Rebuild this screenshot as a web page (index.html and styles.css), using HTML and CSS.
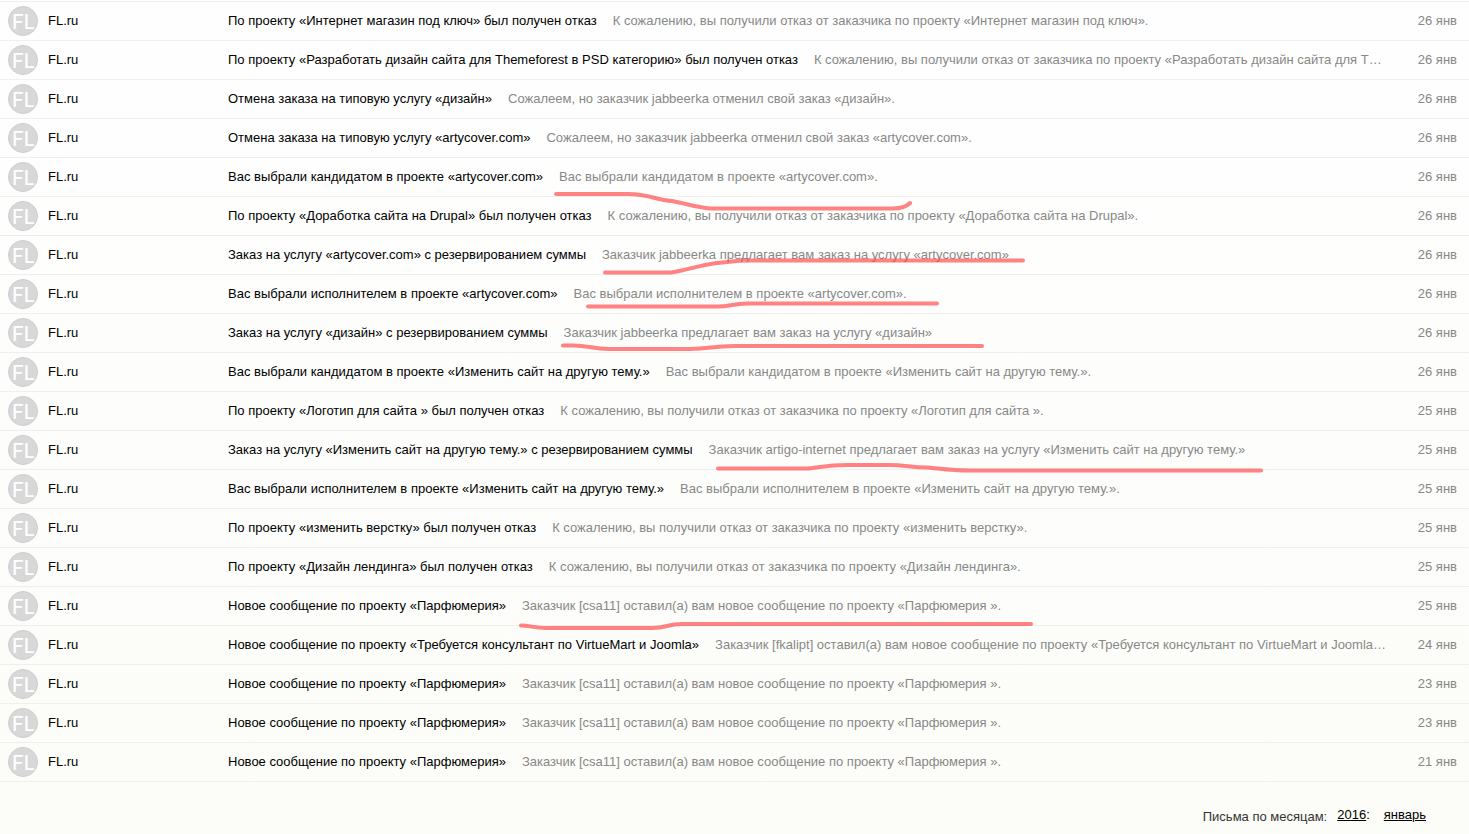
FILE: index.html
```html
<!DOCTYPE html>
<html lang="ru">
 <head>
  <meta charset="UTF-8">
  <title>Входящие</title>
  <link rel="stylesheet" href="styles.css">
 </head>
 <body>
  <div id="wrap">
   <ul class="mails">
    <li><a href="#"><span class="ava">FL</span><span class="from">FL.ru</span><span class="subj">По проекту «Интернет магазин под ключ» был получен отказ</span><span class="text">К сожалению, вы получили отказ от заказчика по проекту «Интернет магазин под ключ».</span><span class="date">26 янв</span></a></li>
    <li><a href="#"><span class="ava">FL</span><span class="from">FL.ru</span><span class="subj">По проекту «Разработать дизайн сайта для Themeforest в PSD категорию» был получен отказ</span><span class="text">К сожалению, вы получили отказ от заказчика по проекту «Разработать дизайн сайта для T…</span><span class="date">26 янв</span></a></li>
    <li><a href="#"><span class="ava">FL</span><span class="from">FL.ru</span><span class="subj">Отмена заказа на типовую услугу «дизайн»</span><span class="text">Сожалеем, но заказчик jabbeerka отменил свой заказ «дизайн».</span><span class="date">26 янв</span></a></li>
    <li><a href="#"><span class="ava">FL</span><span class="from">FL.ru</span><span class="subj">Отмена заказа на типовую услугу «artycover.com»</span><span class="text">Сожалеем, но заказчик jabbeerka отменил свой заказ «artycover.com».</span><span class="date">26 янв</span></a></li>
    <li><a href="#"><span class="ava">FL</span><span class="from">FL.ru</span><span class="subj">Вас выбрали кандидатом в проекте «artycover.com»</span><span class="text">Вас выбрали кандидатом в проекте «artycover.com».</span><span class="date">26 янв</span></a></li>
    <li><a href="#"><span class="ava">FL</span><span class="from">FL.ru</span><span class="subj">По проекту «Доработка сайта на Drupal» был получен отказ</span><span class="text">К сожалению, вы получили отказ от заказчика по проекту «Доработка сайта на Drupal».</span><span class="date">26 янв</span></a></li>
    <li><a href="#"><span class="ava">FL</span><span class="from">FL.ru</span><span class="subj">Заказ на услугу «artycover.com» с резервированием суммы</span><span class="text">Заказчик jabbeerka предлагает вам заказ на услугу «artycover.com»</span><span class="date">26 янв</span></a></li>
    <li><a href="#"><span class="ava">FL</span><span class="from">FL.ru</span><span class="subj">Вас выбрали исполнителем в проекте «artycover.com»</span><span class="text">Вас выбрали исполнителем в проекте «artycover.com».</span><span class="date">26 янв</span></a></li>
    <li><a href="#"><span class="ava">FL</span><span class="from">FL.ru</span><span class="subj">Заказ на услугу «дизайн» с резервированием суммы</span><span class="text">Заказчик jabbeerka предлагает вам заказ на услугу «дизайн»</span><span class="date">26 янв</span></a></li>
    <li><a href="#"><span class="ava">FL</span><span class="from">FL.ru</span><span class="subj">Вас выбрали кандидатом в проекте «Изменить сайт на другую тему.»</span><span class="text">Вас выбрали кандидатом в проекте «Изменить сайт на другую тему.».</span><span class="date">26 янв</span></a></li>
    <li><a href="#"><span class="ava">FL</span><span class="from">FL.ru</span><span class="subj">По проекту «Логотип для сайта » был получен отказ</span><span class="text">К сожалению, вы получили отказ от заказчика по проекту «Логотип для сайта ».</span><span class="date">25 янв</span></a></li>
    <li><a href="#"><span class="ava">FL</span><span class="from">FL.ru</span><span class="subj">Заказ на услугу «Изменить сайт на другую тему.» с резервированием суммы</span><span class="text">Заказчик artigo-internet предлагает вам заказ на услугу «Изменить сайт на другую тему.»</span><span class="date">25 янв</span></a></li>
    <li><a href="#"><span class="ava">FL</span><span class="from">FL.ru</span><span class="subj">Вас выбрали исполнителем в проекте «Изменить сайт на другую тему.»</span><span class="text">Вас выбрали исполнителем в проекте «Изменить сайт на другую тему.».</span><span class="date">25 янв</span></a></li>
    <li><a href="#"><span class="ava">FL</span><span class="from">FL.ru</span><span class="subj">По проекту «изменить верстку» был получен отказ</span><span class="text">К сожалению, вы получили отказ от заказчика по проекту «изменить верстку».</span><span class="date">25 янв</span></a></li>
    <li><a href="#"><span class="ava">FL</span><span class="from">FL.ru</span><span class="subj">По проекту «Дизайн лендинга» был получен отказ</span><span class="text">К сожалению, вы получили отказ от заказчика по проекту «Дизайн лендинга».</span><span class="date">25 янв</span></a></li>
    <li><a href="#"><span class="ava">FL</span><span class="from">FL.ru</span><span class="subj">Новое сообщение по проекту «Парфюмерия»</span><span class="text">Заказчик [csa11] оставил(а) вам новое сообщение по проекту «Парфюмерия ».</span><span class="date">25 янв</span></a></li>
    <li><a href="#"><span class="ava">FL</span><span class="from">FL.ru</span><span class="subj">Новое сообщение по проекту «Требуется консультант по VirtueMart и Joomla»</span><span class="text">Заказчик [fkalipt] оставил(а) вам новое сообщение по проекту «Требуется консультант по VirtueMart и Joomla…</span><span class="date">24 янв</span></a></li>
    <li><a href="#"><span class="ava">FL</span><span class="from">FL.ru</span><span class="subj">Новое сообщение по проекту «Парфюмерия»</span><span class="text">Заказчик [csa11] оставил(а) вам новое сообщение по проекту «Парфюмерия ».</span><span class="date">23 янв</span></a></li>
    <li><a href="#"><span class="ava">FL</span><span class="from">FL.ru</span><span class="subj">Новое сообщение по проекту «Парфюмерия»</span><span class="text">Заказчик [csa11] оставил(а) вам новое сообщение по проекту «Парфюмерия ».</span><span class="date">23 янв</span></a></li>
    <li><a href="#"><span class="ava">FL</span><span class="from">FL.ru</span><span class="subj">Новое сообщение по проекту «Парфюмерия»</span><span class="text">Заказчик [csa11] оставил(а) вам новое сообщение по проекту «Парфюмерия ».</span><span class="date">21 янв</span></a></li>
   </ul>
   <div class="months">
    <span class="label">Письма по месяцам:</span>
    <span class="year"><a href="#">2016</a>:</span>
    <a href="#">январь</a>
   </div>
   <!-- red marker lines over the list -->
   <svg class="marks" aria-hidden="true">
    <path d="M556 194H628C650 194 655 200 672 201C688 204 696 207 710 208.500H893C902 208.500 907 206 910 203"/>
    <path d="M605 272.500H671C688 270 700 265 717 263C731 262 734 260.500 750 260.500H1023"/>
    <path d="M588 306.500H718C730 306.500 732 303.500 748 303.500H937"/>
    <path d="M563 345.500H574C588 345.500 592 349 610 349H690C710 349 712 346 734 346H982"/>
    <path d="M718 468.500H806C816 468.500 824 465 848 465H888C908 465 908 467.500 928 467.500C940 468.500 950 470.500 970 470.500H1261"/>
    <path d="M521 625.500C530 625.500 534 628 546 628H652C668 628 666 624 682 624H1031"/>
   </svg>
  </div>
 </body>
</html>
```
FILE: styles.css
```css
*{ margin:0; padding:0; box-sizing:border-box;}

body{
 min-height:100vh;
 background:linear-gradient(#fefefe 0%, #fdfefc 50%, #fcfdf8 100%);
 color:#000;
 font:13px/38px "Liberation Sans", Arial, sans-serif;
}

a{ color:#000;}

#wrap{
 position:relative;
 padding-top:1px;
}

.mails{
 list-style:none;
 border-top:1px solid #efefed;
}

.mails li{ border-bottom:1px solid #efefed;}

.mails a{
 display:flex;
 align-items:center;
 padding:0 12px 0 8px;
 text-decoration:none;
 white-space:nowrap;
}

.ava{
 flex:none;
 width:30px;
 height:30px;
 margin-right:10px;
 border:1px solid #cecece;
 border-radius:50%;
 background:#d8d8d8;
 color:#fff;
 font-family:"Liberation Sans Narrow", Lato, sans-serif;
 font-size:21px;
 line-height:27px;
 text-align:center;
}

.from{
 flex:none;
 width:180px;
}

.subj{ flex:none;}

.text{
 flex:1;
 min-width:0;
 margin:0 16px;
 overflow:hidden;
 text-overflow:ellipsis;
 color:#888;
}

.date{
 flex:none;
 color:#888;
}

.months{
 display:flex;
 justify-content:flex-end;
 padding:25px 43px 0 0;
 line-height:16px;
}

.months .label{
 margin-right:10px;
 color:#333;
 line-height:20px;
}

.months .year{ margin-right:14px;}

.marks{
 position:absolute;
 top:0;
 left:0;
 width:100%;
 height:100%;
 pointer-events:none;
}

.marks path{
 fill:none;
 stroke:#ff4040;
 stroke-opacity:.65;
 stroke-width:4;
 stroke-linecap:round;
 stroke-linejoin:round;
}
```
